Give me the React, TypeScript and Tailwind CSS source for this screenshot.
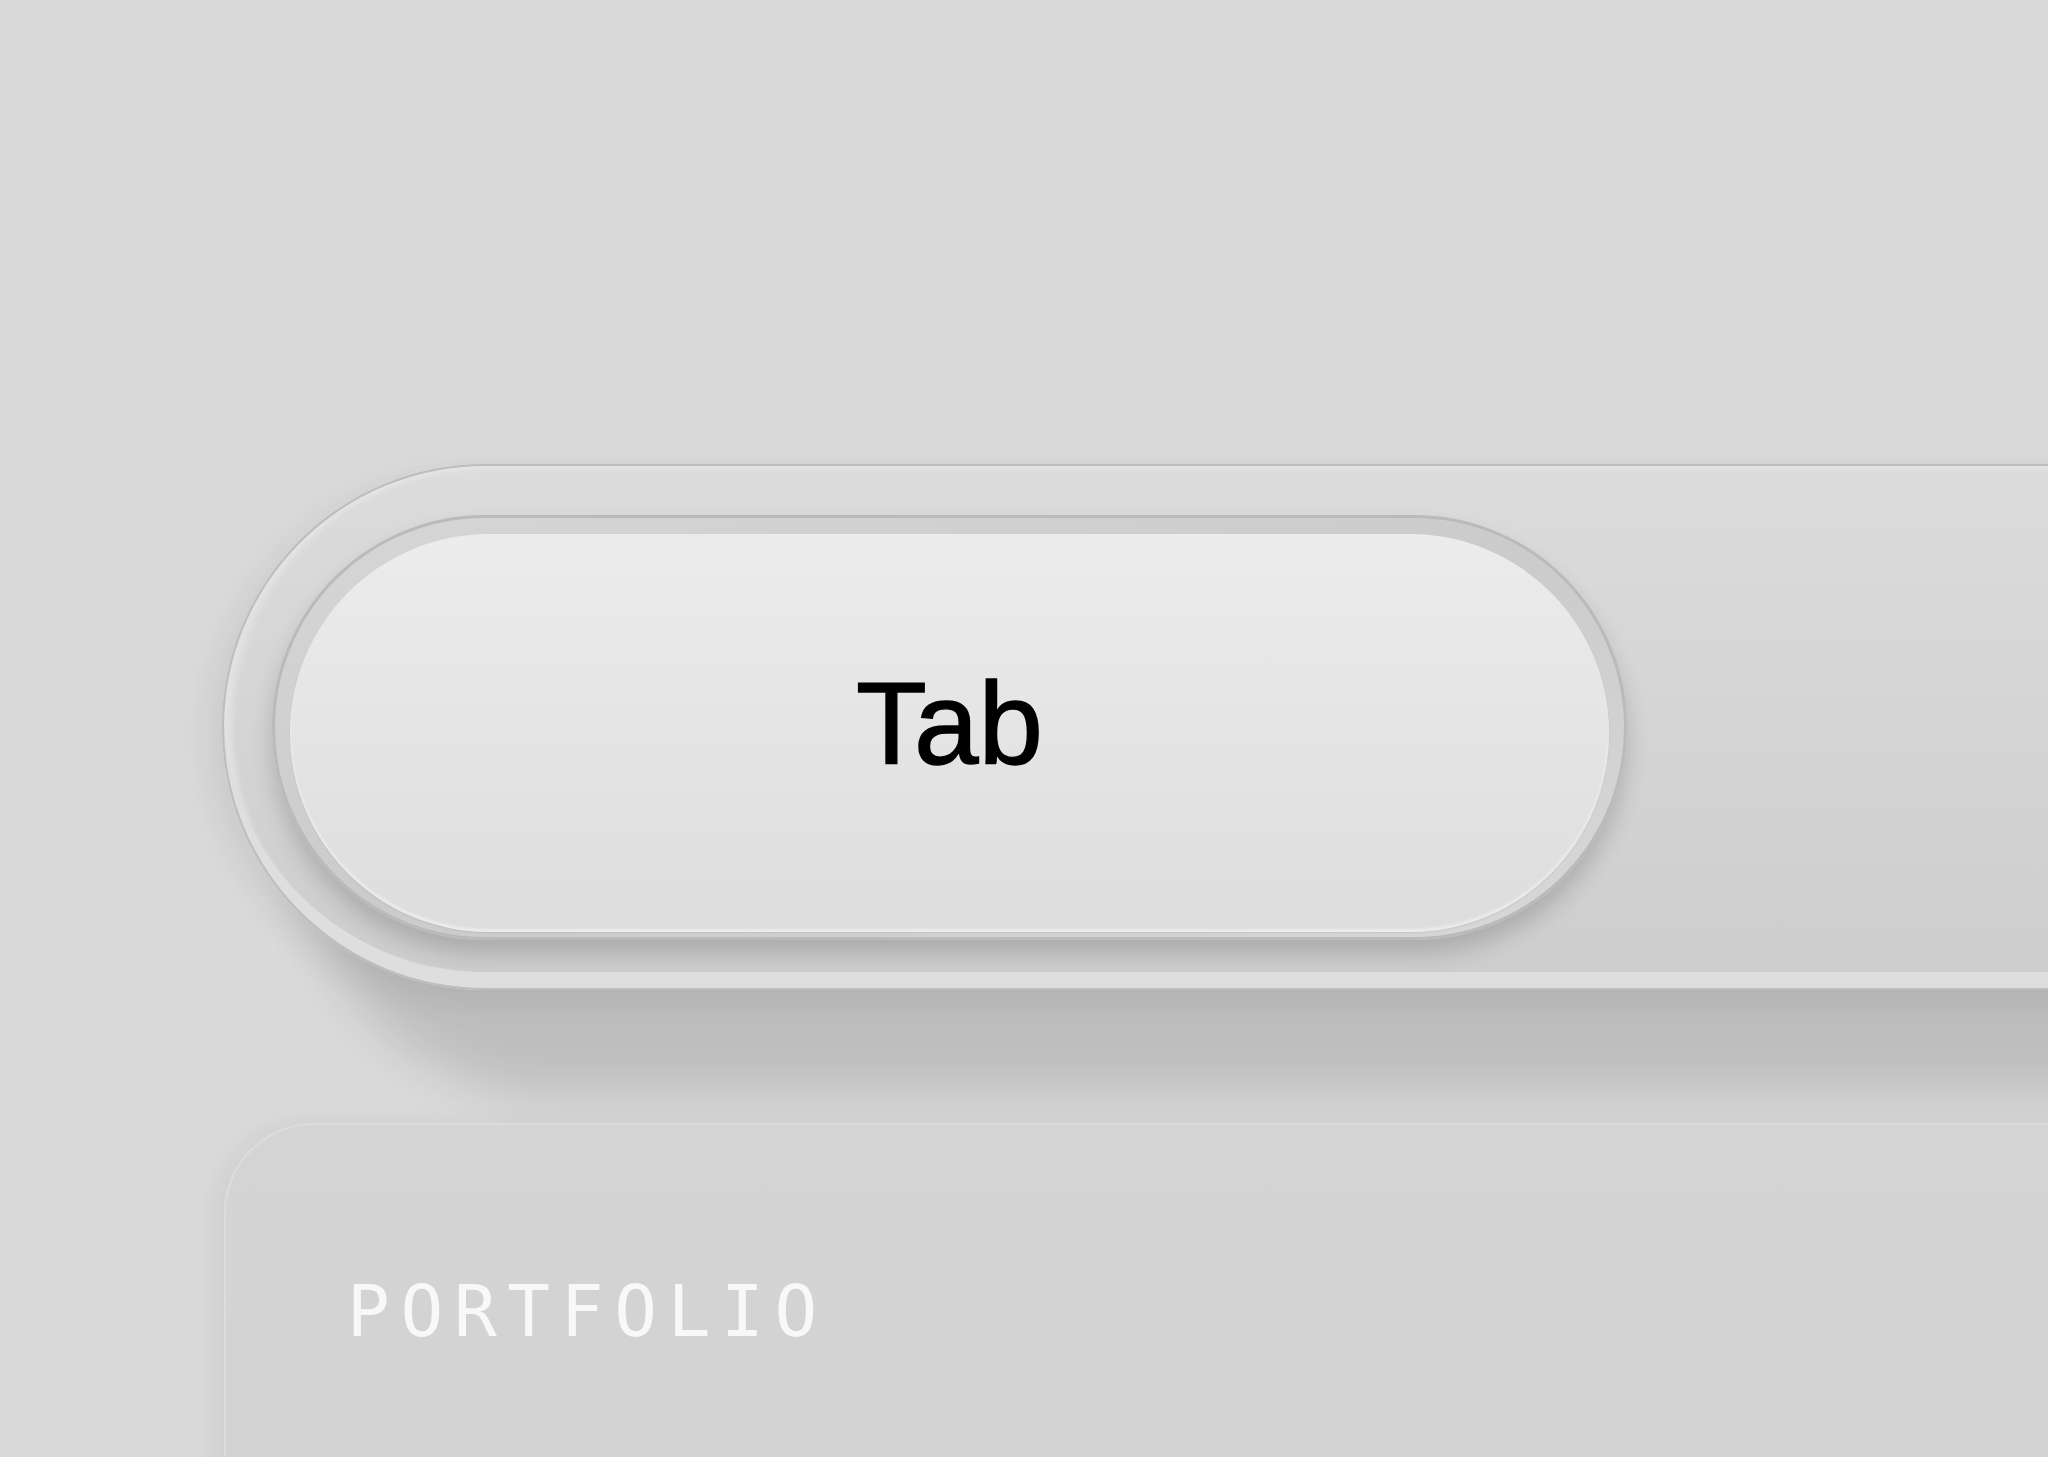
export default function App() {
  return (
    <div className="flex h-[1457px] w-full flex-col overflow-hidden bg-[#dadada] pl-[222px] pt-[464px]">
      {/* track */}
      <div className="h-[526px] w-[1900px] shrink-0 rounded-l-[263px] shadow-[70px_115px_50px_-10px_rgba(0,0,0,0.13),-14px_10px_34px_rgba(0,0,0,0.07)]">
        <div className="flex h-full w-full items-center rounded-l-[263px] border-2 border-r-0 border-[#bdbdbd] bg-linear-to-b from-[#dcdcdc] to-[#cdcdcd] pl-[48px] shadow-[inset_0_6px_4px_-2px_#e4e4e4,inset_0_-16px_0_#dedede,inset_12px_0_6px_-4px_#e2e2e2]">
          <div className="h-[425px] w-[1355px] rounded-full border-[3px] border-[#bababa] bg-linear-to-br from-[#d6d6d6] via-[#cbcbcb] to-[#d8d8d8] px-[15px] pb-[5px] pt-[16px] shadow-[0_14px_22px_rgba(0,0,0,0.17)]">
            <div className="flex h-full w-full items-center justify-center rounded-full bg-linear-to-b from-[#ececec] to-[#dddddd] pb-[18px] shadow-[inset_0_-3px_3px_rgba(255,255,255,0.45),0_1px_2px_rgba(0,0,0,0.08)]">
              <span className="font-['Liberation_Sans',Arial,sans-serif] text-[116px] leading-none text-black [-webkit-text-stroke:1.4px_black]">
                Tab
              </span>
            </div>
          </div>
        </div>
      </div>

      {/* card */}
      <div className="ml-[2px] mt-[133px] h-[420px] w-[1900px] shrink-0 rounded-tl-[90px] border-l-2 border-t-2 border-[#dcdcdc] bg-linear-to-b from-[#d4d4d4] to-[#d2d2d2] pl-[121px] pt-[151px] shadow-[-10px_0_26px_rgba(0,0,0,0.05)]">
        <p className="font-['DejaVu_Sans_Mono','Liberation_Mono',monospace] text-[71px] leading-none tracking-[10.7px] text-[#f8f8f8]">
          PORTFOLIO
        </p>
      </div>
    </div>
  );
}
